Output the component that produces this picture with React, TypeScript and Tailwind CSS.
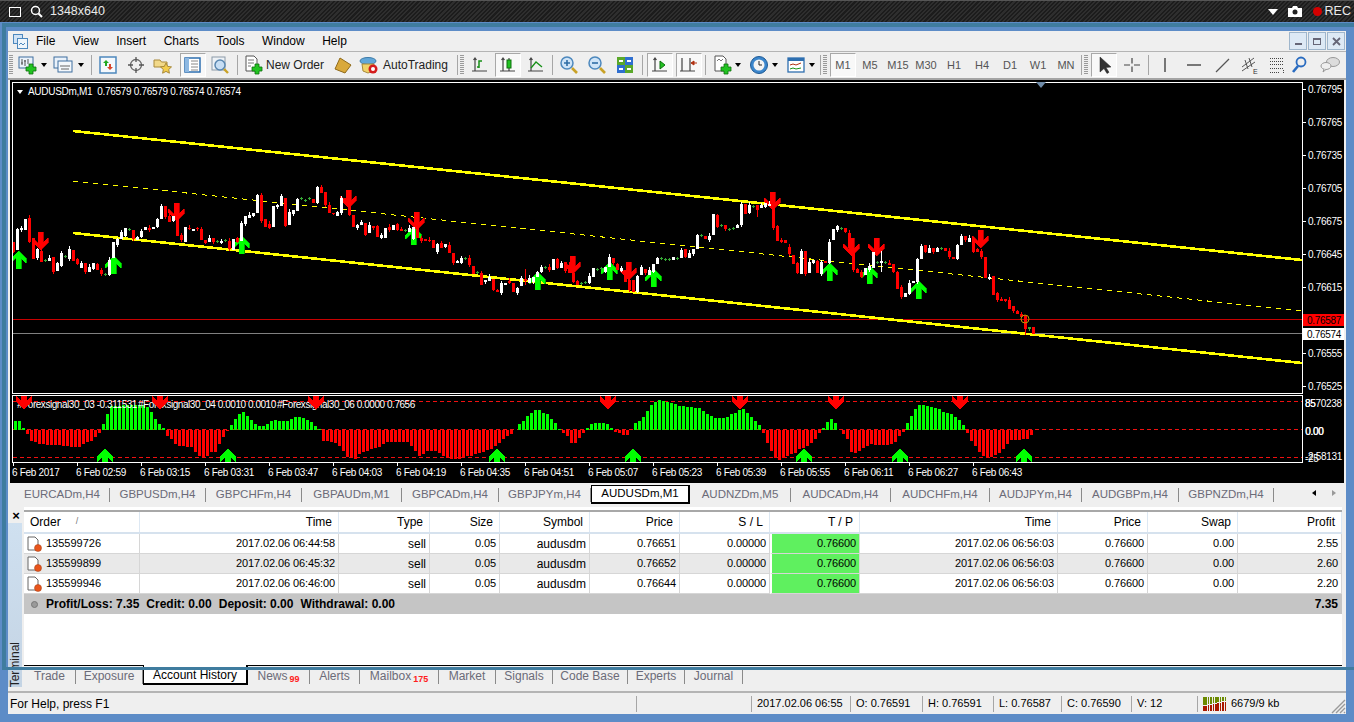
import React from "react";

const candleData =
  "r242-252 w229-250 w228-230 w219-230 r218-242 r238-259 w249-258 r251-262 g260 w258-261 r257-272 w263-271 w253-266 g256 w249-259 r250-261 r259-264 w263-268 r263-272 w267-272 w263-269 r264-270 r270-274 g274 w260-275 w242-258 w239-245 w232-239 w228-236 g229 r230-239 w237-240 w231-237 w227-230 r228-230 w227-229 w219-227 w206-219 r206-217 r216-222 w216-221 r210-236 r235-240 w227-242 r228-229 w229-231 r228-229 r229-240 r240-243 w238-242 r238-242 g241 w241-243 g240 r241-249 w239-250 r238-242 w223-241 w216-224 w215-218 w213-216 w195-213 r195-221 r219-227 r224-228 w206-227 w205-207 w196-206 r198-226 w212-225 w210-214 w199-211 g198 g200 g198 r199-203 w187-203 r187-193 r192-205 r205-213 r213-214 w212-216 w198-213 r198-203 r203-215 r215-227 w225-228 w222-225 r223-235 w225-233 r226-228 r226-237 w235-238 w228-238 r227-230 w225-230 r224-230 r229-231 g230 w228-232 w227-239 r220-238 r238-241 r239-241 r240-241 r240-248 w244-252 r243-248 w244-247 r245-253 r253-263 w261-263 w258-263 g258 r258-265 r266-274 g272 r273-285 w280-282 w277-281 r279-290 r290-292 w283-293 w283-285 r281-283 r283-292 w288-293 w278-286 r279-281/269-285 w278-283 w277-282 w272-277 w267-272 g267 r267-270 w259-270 r259-268 w263-268 r262-271 r265-273 r273-282 r281-285 g283 g282 w276-283 w268-277 g269 g268 w267-272 w257-267 r258-263 r264-270 w268-271 r270-282 r280-290 r280-292 w276-292 w267-275 r269-273 w270-275 w264-272 w258-264 g258 g259 g259 w257-260 g258 w250-258 r249-257 w253-258 w249-254 w235-249 g235 r236-239 w236-240 w214-235 r215-227 g225 r225-229 g229 g228 w225-228 w204-225 r204-214 w205-213 g206 r205-210/205-217 w205-208 w203-207 w204-206 r203-228 r226-241 r240-242 r240-243 r247-254 r255-264 r263-273 w251-274 r251-274 w262-273 w260-263 r261-273 w262-274 r261-263 w242-263 w229-240 w226-230 g228 r228-232 r233-248 r248-270 r269-273 r272-277 w268-275 w266-270 w252-268 g262 w261-263/251-272 g262 r263-265 r264-272 r272-289 r287-297 w293-297 w283-294 w281-283 w259-282 w246-259 r245-252 w248-253 r248-252 w248-252 g248 r248-251 r251-257 r257-259 w245-259 w236-245 r236-240 w238-242 r238-252 r249-252 r251-257 r257-278 w277-279 r276-295 r293-300 r299-301 r299-301 r300-309 r306-311 r311-314 r314-317 r315-329/315-335 g328 r327-334";

const histogram = [
  9, 9, 2, -4, -11, -12, -14, -14, -15, -15, -15, -15, -16, -16, -17, -17, -17, -14, -12, -11, -7, -3, 6, 16, 24, 24, 24, 25, 25, 25, 25, 25, 25, 23, 18, 11, 6, 2,
  -6, -9, -14, -16, -16, -17, -17, -22, -26, -27, -26, -22, -22, -14, -7, -1, 5, 11, 16, 18, 14, 10, 6, 4, 4, 6, 9, 10, 9, 9, 9, 11, 13, 13, 12, 10, 8, 4, 1,
  -11, -11, -12, -13, -16, -21, -27, -27, -29, -24, -22, -21, -19, -18, -17, -14, -12, -12, -12, -12, -12, -12, -16, -21, -26, -24, -21, -21, -21,
  -23, -26, -28, -29, -29, -29, -27, -26, -26, -24, -23, -22, -20, -19, -16, -13, -9, -6, -4, 0, 6, 9, 14, 17, 20, 20, 17, 16, 11, 7, 1,
  -3, -6, -13, -13, -8, -3, 2, 6, 7, 7, 7, 6, 2, -2, -3, -5, -5, 0, 7, 9, 13, 19, 25, 28, 30, 29, 28, 27, 26, 24, 24, 23, 23, 22, 22, 19, 16, 14, 12, 12, 12, 13, 16, 17, 20, 21, 17, 13, 9, 5,
  -3, -13, -21, -28, -30, -28, -26, -24, -23, -19, -18, -16, -13, -9, -3, 2, 8, 11, 7, 0, -4, -9, -22, -23, -21, -18, -16, -14, -15, -15, -15, -15, -14, -12, -6, -2,
  7, 14, 21, 25, 25, 24, 23, 22, 21, 18, 17, 16, 13, 10, 5, -3, -11, -16, -22, -26, -28, -27, -25, -23, -19, -14, -10, -10, -10, -9, -9, -5,
];

const bigUp: [number, number][] = [[18, 251], [113, 256], [241, 236], [413, 227], [537, 272], [609, 262], [653, 269], [829, 263], [869, 266], [918, 281]];
const bigDown: [number, number][] = [[40, 232], [176, 203], [348, 190], [416, 212], [572, 256], [628, 262], [772, 192], [851, 238], [876, 238], [980, 230]];
const smallDown = [24, 160, 316, 608, 740, 836, 960];
const smallUp = [105, 228, 497, 633, 804, 900, 1024];

const bigShape = [[0, 0], [8, 8], [8, 12], [2.5, 7], [2.5, 18], [-2.5, 18], [-2.5, 7], [-8, 12], [-8, 8]];
const smallShape = [[0, 0], [8, 7], [8, 13], [3, 9], [3, 13], [-3, 13], [-3, 9], [-8, 13], [-8, 7]];

function arrowPoints(shape: number[][], cx: number, top: number, down: boolean) {
  const h = shape[4][1];
  return shape.map(([x, y]) => `${cx + x},${down ? top + h - y : top + y}`).join(" ");
}

function Candles() {
  return (
    <>
      {candleData.split(" ").map((tok, i) => {
        const x = 13 + i * 4;
        const kind = tok[0];
        if (kind === "g") {
          const y = Number(tok.slice(1));
          return (
            <g key={i} fill="#35a835">
              <rect x={x - 1} y={y} width={3} height={1} />
              <rect x={x} y={y - 1} width={1} height={3} />
            </g>
          );
        }
        const [body, wick] = tok.slice(1).split("/");
        const [a, b] = body.split("-").map(Number);
        const hi = wick ? Number(wick.split("-")[0]) : a - [0, 1, 2, 0, 3][i % 5];
        const lo = wick ? Number(wick.split("-")[1]) : b + [1, 0, 2, 0][i % 4];
        const fill = kind === "w" ? "#ffffff" : "#ff0000";
        return (
          <g key={i} fill={fill}>
            <rect x={x} y={hi} width={1} height={lo - hi} />
            <rect x={x - 1} y={a} width={3} height={b - a} />
          </g>
        );
      })}
    </>
  );
}

function MainPlot() {
  return (
    <svg width="1289" height="310" viewBox="13 83 1289 310" shapeRendering="crispEdges" className="block">
      <line x1="13" y1="319" x2="1302" y2="319" stroke="#c80000" />
      <line x1="13" y1="333" x2="1302" y2="333" stroke="#808080" />
      <line x1="73" y1="131" x2="1302" y2="260" stroke="#ffff00" strokeWidth="2.6" />
      <line x1="73" y1="181" x2="1302" y2="311" stroke="#ffff00" strokeWidth="1" strokeDasharray="5 5" />
      <line x1="73" y1="233" x2="1302" y2="363" stroke="#ffff00" strokeWidth="2.6" />
      {bigUp.map(([x, y]) => (
        <g key={x}>
          <polygon points={arrowPoints(bigShape, x + 1, y, false)} fill="#00a800" />
          <polygon points={arrowPoints(bigShape, x, y, false)} fill="#00ff00" />
        </g>
      ))}
      {bigDown.map(([x, y]) => (
        <g key={x}>
          <polygon points={arrowPoints(bigShape, x + 1, y, true)} fill="#a80000" />
          <polygon points={arrowPoints(bigShape, x, y, true)} fill="#ff0000" />
        </g>
      ))}
      <Candles />
      <circle cx="1025" cy="319" r="4" fill="none" stroke="#b89a00" shapeRendering="auto" />
      <rect x="1028" y="327" width="3" height="1" fill="#35a835" />
      <rect x="1029" y="327" width="1" height="4" fill="#35a835" />
    </svg>
  );
}

function SubPlot() {
  return (
    <svg width="1289" height="66" viewBox="13 396 1289 66" shapeRendering="crispEdges" className="block">
      {[401, 429, 457].map((y) => (
        <line key={y} x1="13" y1={y} x2="1302" y2={y} stroke="#f01010" strokeDasharray="4 3" />
      ))}
      {histogram.map((v, i) => (
        <rect key={i} x={14 + i * 4} y={v > 0 ? 430 - v : 430} width={3} height={Math.abs(v)} fill={v > 0 ? "#00ff00" : "#ff0000"} />
      ))}
      <g fill="#ffffff" fontSize="10" letterSpacing="-0.45" shapeRendering="auto">
        <text x="17" y="408">#Forexsignal30_03 -0.311531</text>
        <text x="138" y="408">#Forexsignal30_04 0.0010 0.0010</text>
        <text x="277" y="408">#Forexsignal30_06 0.0000 0.7656</text>
      </g>
      {smallDown.map((x) => (
        <polygon key={x} points={arrowPoints(smallShape, x, 396, true)} fill="#ff0000" />
      ))}
      {smallUp.map((x) => (
        <polygon key={x} points={arrowPoints(smallShape, x, 449, false)} fill="#00ff00" />
      ))}
    </svg>
  );
}

const Icon = ({ children, size = 20 }: { children: React.ReactNode; size?: number }) => (
  <svg width={size} height={size} viewBox="0 0 20 20">
    {children}
  </svg>
);

const Plus = () => <path d="M11 9h4v3h3v4h-3v3h-4v-3H8v-4h3z" fill="#22c322" stroke="#0d6f0d" strokeWidth="0.8" />;

const Axes = () => <path d="M5 3v13M2 16h15M3.5 5L5 3l1.5 2" fill="none" stroke="#444" strokeWidth="1.2" />;

const icons: Record<string, React.ReactNode> = {
  newChart: (
    <>
      <rect x="1" y="2" width="14" height="11" fill="#eaf2fb" stroke="#3f6f9f" />
      <path d="M4 4v6M3 8h2M7 5v6M6 6h2M10 4v5" stroke="#555" fill="none" />
      <Plus />
    </>
  ),
  profiles: (
    <>
      <rect x="1" y="2" width="13" height="11" fill="#eaf2fb" stroke="#3f6f9f" />
      <rect x="5" y="6" width="14" height="11" fill="#f4f8fc" stroke="#3f6f9f" />
      <path d="M7 11h10M8 14h8" stroke="#666" />
    </>
  ),
  market: (
    <>
      <rect x="2" y="2" width="16" height="16" fill="#f4f8fc" stroke="#4d88bd" strokeWidth="1.5" />
      <path d="M8 5l3 3H9v3H7V8H5z" fill="#22a822" />
      <path d="M12 15l-3-3h2V9h2v3h2z" fill="#d8452a" />
    </>
  ),
  nav: (
    <>
      <circle cx="10" cy="10" r="5.5" fill="none" stroke="#666" strokeWidth="1.3" />
      <path d="M10 2v5M10 13v5M2 10h5M13 10h5" stroke="#555" strokeWidth="1.3" />
    </>
  ),
  favorites: (
    <>
      <path d="M1 5h6l1.5 2H14v5H1z" fill="#f2d98a" stroke="#a8893a" />
      <path d="M13 8l1.7 3.4 3.8.5-2.8 2.6.7 3.7-3.4-1.8-3.4 1.8.7-3.7-2.8-2.6 3.8-.5z" fill="#f3cd4d" stroke="#a8893a" />
    </>
  ),
  navigator: (
    <>
      <rect x="2" y="3" width="15" height="14" fill="#fff" stroke="#2e6fb0" strokeWidth="1.5" />
      <rect x="2" y="3" width="4" height="14" fill="#8db8e2" />
      <path d="M8 6h7M8 9h7M8 12h7M8 15h7" stroke="#888" />
    </>
  ),
  tester: (
    <>
      <rect x="2" y="2" width="13" height="13" fill="#eef2f6" stroke="#8b9aa8" />
      <circle cx="10" cy="10" r="5" fill="#c7def4" stroke="#5a87b0" strokeWidth="1.5" />
      <path d="M14 14l4 4" stroke="#c9a227" strokeWidth="2.4" />
    </>
  ),
  newOrder: (
    <>
      <path d="M2 1h8l3 3v12H2z" fill="#fff" stroke="#555" />
      <path d="M4 5h6M4 8h6M4 11h3" stroke="#777" />
      <Plus />
    </>
  ),
  wood: <path d="M7 3l11 7-6 8-10-4z" fill="#d9a93c" stroke="#8f6a1b" />,
  auto: (
    <>
      <ellipse cx="9" cy="6" rx="8" ry="3.5" fill="#62a7d8" stroke="#3c7aa8" />
      <path d="M3 9h12l-1 7-5 2-5-2z" fill="#f1d268" stroke="#a8893a" />
      <circle cx="14" cy="14" r="4.5" fill="#d41c1c" />
      <circle cx="14" cy="14" r="2" fill="#fff" />
    </>
  ),
  bar: (
    <>
      <Axes />
      <path d="M9 13V6h3M9 12h-2" fill="none" stroke="#179017" strokeWidth="1.5" />
    </>
  ),
  candle: (
    <>
      <Axes />
      <path d="M11 3v13" stroke="#222" />
      <rect x="9" y="5" width="4" height="8" fill="#22c322" stroke="#0d6f0d" />
    </>
  ),
  line: (
    <>
      <Axes />
      <path d="M5 13l5-6 6 5" fill="none" stroke="#179017" strokeWidth="1.3" />
    </>
  ),
  zoomIn: (
    <>
      <circle cx="8" cy="8" r="6" fill="#cfe4f7" stroke="#4d88bd" strokeWidth="1.5" />
      <path d="M5 8h6M8 5v6" stroke="#2f6da5" strokeWidth="1.6" />
      <path d="M13 13l5 5" stroke="#c9a227" strokeWidth="2.6" />
    </>
  ),
  zoomOut: (
    <>
      <circle cx="8" cy="8" r="6" fill="#cfe4f7" stroke="#4d88bd" strokeWidth="1.5" />
      <path d="M5 8h6" stroke="#2f6da5" strokeWidth="1.6" />
      <path d="M13 13l5 5" stroke="#c9a227" strokeWidth="2.6" />
    </>
  ),
  tile: (
    <>
      <rect x="2" y="2" width="8" height="8" fill="#5aa82a" />
      <rect x="10" y="2" width="8" height="8" fill="#2f6fd0" />
      <rect x="2" y="10" width="8" height="8" fill="#2f6fd0" />
      <rect x="10" y="10" width="8" height="8" fill="#5aa82a" />
      <path d="M4 6h4M12 6h4M4 14h4M12 14h4" stroke="#fff" strokeWidth="2" />
    </>
  ),
  scroll: (
    <>
      <Axes />
      <path d="M10 6l5 4-5 4z" fill="#22c322" stroke="#0d6f0d" />
    </>
  ),
  shift: (
    <>
      <path d="M3 3v13M1 16h15M11 3v13" fill="none" stroke="#444" strokeWidth="1.2" />
      <path d="M14 8h4M12 8l3-2v4z" fill="#b03010" stroke="#b03010" />
    </>
  ),
  indicators: (
    <>
      <path d="M2 1h8l3 3v12H2z" fill="#fff" stroke="#555" />
      <path d="M4 6l2-2 2 2 2-2" fill="none" stroke="#777" />
      <Plus />
    </>
  ),
  clock: (
    <>
      <circle cx="10" cy="10" r="8.5" fill="#3b86cc" stroke="#1f5a95" />
      <circle cx="10" cy="10" r="5.5" fill="#f4f4f4" />
      <path d="M10 6v4h3" fill="none" stroke="#222" />
    </>
  ),
  templates: (
    <>
      <rect x="2" y="3" width="16" height="14" fill="#fff" stroke="#2e6fb0" strokeWidth="1.3" />
      <rect x="2" y="3" width="16" height="3" fill="#2e6fb0" />
      <path d="M4 10l3-1 3 1 5-2" fill="none" stroke="#b03010" />
      <path d="M4 14l3-1 3 1 5-1" fill="none" stroke="#179017" />
    </>
  ),
  cursor: <path d="M6 2v15l4-3.5 3 5 2-1.2-3-4.8 5-.5z" fill="#333" stroke="#222" strokeWidth="0.5" />,
  cross: <path d="M10 3v5.5M10 11.500v5.500M2 10h6M12 10h6" stroke="#444" strokeWidth="1.2" />,
  vert: <path d="M10 3v14" stroke="#444" strokeWidth="1.4" />,
  horiz: <path d="M3 10h14" stroke="#444" strokeWidth="1.4" />,
  trend: <path d="M4 17L17 4" stroke="#555" strokeWidth="1.3" />,
  channel: (
    <>
      <path d="M2 12L14 3M2 16L15 7M5 5l3 9M9 3l3 9" stroke="#555" fill="none" />
      <text x="13" y="19" fontSize="7" fill="#333">E</text>
    </>
  ),
  fib: <path d="M3 3.500h13M3 6.500h13M3 9.500h13M3 13.500h13M3 17.500h10M16.500 15v3" stroke="#444" strokeDasharray="1 1" fill="none" />,
  magnifier: (
    <>
      <circle cx="12" cy="7" r="4.500" fill="none" stroke="#2a6cc0" strokeWidth="1.8" />
      <path d="M9 11l-5 6" stroke="#2a6cc0" strokeWidth="2.6" />
    </>
  ),
  chat: (
    <>
      <ellipse cx="13" cy="7" rx="6.500" ry="4.500" fill="#dcdcdc" stroke="#999" />
      <ellipse cx="6" cy="11" rx="5" ry="3.500" fill="#efefef" stroke="#999" />
      <path d="M4 14l-1 3 3-2.500" fill="#efefef" stroke="#999" />
    </>
  ),
};

const Caret = ({ className }: { className: string }) => (
  <div className={`${className} w-[7px] h-[24px] flex items-center justify-center`}>
    <div className="border-x-[3.500px] border-x-transparent border-t-[4px] border-t-black" />
  </div>
);
const Sep = ({ className }: { className: string }) => <div className={`${className} w-px h-[20px] bg-[#a6a6a6]`} />;
const Grip = ({ className }: { className: string }) => (
  <div className={`${className} w-[4px] h-[20px] bg-[repeating-linear-gradient(180deg,#9a9a9a_0,#9a9a9a_1px,transparent_1px,transparent_2px)]`} />
);
const Tool = ({ name, className }: { name: string; className: string }) => (
  <div className={`${className} w-[20px] h-[24px] flex items-center justify-center`}>
    <Icon>{icons[name]}</Icon>
  </div>
);
const Active = ({ children, className }: { children: React.ReactNode; className: string }) => (
  <div className={`${className} w-[26px] h-[24px] flex items-center justify-center border border-[#a8a8a8] border-r-white border-b-white bg-[#f8f8f8]`}>
    {children}
  </div>
);

const Toolbar = () => (
  <div className="h-[28px] flex items-center bg-[#efefef] border-b-2 border-[#a4a4a4] shrink-0">
    <Grip className="ml-[1px]" />
    <Tool name="newChart" className="ml-[5px]" />
    <Caret className="ml-[2px]" />
    <Tool name="profiles" className="ml-[6px]" />
    <Caret className="ml-[4px]" />
    <Sep className="ml-[7px]" />
    <Tool name="market" className="ml-[6px]" />
    <Tool name="nav" className="ml-[8px]" />
    <Tool name="favorites" className="ml-[7px]" />
    <Active className="ml-[7px]"><Icon>{icons.navigator}</Icon></Active>
    <Tool name="tester" className="ml-[4px]" />
    <Sep className="ml-[7px]" />
    <Tool name="newOrder" className="ml-[6px]" />
    <span className="ml-[2px] w-[57px] text-[12px] whitespace-nowrap text-[#222]">New Order</span>
    <Tool name="wood" className="ml-[10px]" />
    <Tool name="auto" className="ml-[6px]" />
    <span className="ml-[4px] w-[67px] text-[12px] whitespace-nowrap text-[#222]">AutoTrading</span>
    <Sep className="ml-[7px]" />
    <Grip className="ml-[2px]" />
    <Tool name="bar" className="ml-[6px]" />
    <Active className="ml-[5px]"><Icon>{icons.candle}</Icon></Active>
    <Tool name="line" className="ml-[5px]" />
    <Sep className="ml-[6px]" />
    <Tool name="zoomIn" className="ml-[6px]" />
    <Tool name="zoomOut" className="ml-[8px]" />
    <Tool name="tile" className="ml-[8px]" />
    <Sep className="ml-[7px]" />
    <Active className="ml-[4px]"><Icon>{icons.scroll}</Icon></Active>
    <Active className="ml-[3px]"><Icon>{icons.shift}</Icon></Active>
    <Sep className="ml-[3px]" />
    <Tool name="indicators" className="ml-[7px]" />
    <Caret className="ml-[1px]" />
    <Tool name="clock" className="ml-[8px]" />
    <Caret className="ml-[2px]" />
    <Tool name="templates" className="ml-[8px]" />
    <Caret className="ml-[2px]" />
    <Sep className="ml-[5px]" />
    <Grip className="ml-[2px]" />
    <Active className="ml-[3px] text-[11px] text-[#555]">M1</Active>
    {["M5", "M15", "M30", "H1", "H4", "D1", "W1", "MN"].map((t) => (
      <div key={t} className="w-[28px] text-center text-[11px] text-[#555]">{t}</div>
    ))}
    <Sep className="ml-[1px]" />
    <Grip className="ml-[2px]" />
    <Active className="ml-[3px]"><Icon>{icons.cursor}</Icon></Active>
    <Tool name="cross" className="ml-[5px]" />
    <Sep className="ml-[6px]" />
    <Tool name="vert" className="ml-[6px]" />
    <Tool name="horiz" className="ml-[9px]" />
    <Tool name="trend" className="ml-[8px]" />
    <Tool name="channel" className="ml-[8px]" />
    <Tool name="fib" className="ml-[7px]" />
    <Tool name="magnifier" className="ml-[2px]" />
    <Tool name="chat" className="ml-[11px]" />
  </div>
);

const prices = ["0.76795", "0.76765", "0.76735", "0.76705", "0.76675", "0.76645", "0.76615", "", "0.76555", "0.76525"];
const times = ["6 Feb 2017", "6 Feb 02:59", "6 Feb 03:15", "6 Feb 03:31", "6 Feb 03:47", "6 Feb 04:03", "6 Feb 04:19", "6 Feb 04:35", "6 Feb 04:51", "6 Feb 05:07", "6 Feb 05:23", "6 Feb 05:39", "6 Feb 05:55", "6 Feb 06:11", "6 Feb 06:27", "6 Feb 06:43"];

const ChartPanel = () => (
  <div className="ml-[2px] w-[1334px] h-[403px] bg-black pt-[2px] text-white text-[10px] tracking-[-0.3px] shrink-0">
    <div className="relative h-[312px] flex">
      <div className="ml-[2px] w-[1291px] h-[312px] border border-white">
        <MainPlot />
      </div>
      <div className="flex-1">
        {prices.map((p, i) => (
          <div key={i} className="h-[33.1px]">
            {p && (
              <div className="h-[14px] flex items-center gap-[2px]">
                <div className="w-[3px] h-px bg-white" />
                <span>{p}</span>
              </div>
            )}
          </div>
        ))}
      </div>
      <div className="absolute left-[7px] top-[2px] flex items-center gap-[5px] whitespace-nowrap">
        <div className="border-x-[3.500px] border-x-transparent border-t-[4px] border-t-white" />
        <span>AUDUSDm,M1&nbsp; 0.76579 0.76579 0.76574 0.76574</span>
      </div>
      <div className="absolute left-[1026px] top-0 border-x-[5px] border-x-transparent border-t-[6px] border-t-[#6f8ba8]" />
      <div className="absolute left-[1293px] top-[232px] w-[41px] h-[12px] bg-[#ff0000] text-black flex items-center pl-[4px]">0.76587</div>
      <div className="absolute left-[1293px] top-[246px] w-[41px] h-[12px] bg-white text-black flex items-center pl-[4px]">0.76574</div>
    </div>
    <div className="relative mt-px h-[68px] flex">
      <div className="ml-[2px] w-[1291px] h-[68px] border border-white">
        <SubPlot />
      </div>
      <div className="absolute left-[1295px] top-0 h-[68px] w-[39px]">
        <span className="absolute left-0 top-[1px]">85</span>
        <span className="absolute left-0 top-[1px]">8570238</span>
        <span className="absolute left-0 top-[29px]">0.00</span>
        <span className="absolute left-[0.5px] top-[29px]">0.00</span>
        <span className="absolute left-0 top-[56px]">-25</span>
        <span className="absolute left-0 top-[54px]">-2.58131</span>
      </div>
    </div>
    <div className="ml-[2px] flex">
      {times.map((t) => (
        <div key={t} className="w-[64px] whitespace-nowrap">
          <div className="ml-px w-px h-[3px] bg-white" />
          <div className="mt-[1px] leading-[12px]">{t}</div>
        </div>
      ))}
    </div>
  </div>
);

const docTabs: [string, string][] = [
  ["EURCADm,H4", "w-[95px]"],
  ["GBPUSDm,H4", "w-[96px]"],
  ["GBPCHFm,H4", "w-[96px]"],
  ["GBPAUDm,M1", "w-[100px]"],
  ["GBPCADm,H4", "w-[97px]"],
  ["GBPJPYm,H4", "w-[92px]"],
  ["AUDUSDm,M1", "w-[99px]"],
  ["AUDNZDm,M5", "w-[101px]"],
  ["AUDCADm,H4", "w-[100px]"],
  ["AUDCHFm,H4", "w-[99px]"],
  ["AUDJPYm,H4", "w-[92px]"],
  ["AUDGBPm,H4", "w-[97px]"],
  ["GBPNZDm,H4", "w-[95px]"],
];

const DocTabs = () => (
  <div className="h-[24px] bg-[#efefef] flex items-start pt-[2px] pl-[7px] text-[11.500px] shrink-0">
    {docTabs.map(([t, w]) =>
      t === "AUDUSDm,M1" ? (
        <div key={t} className={`${w} h-[19px] bg-white border border-black border-r-2 border-b-2 flex items-center justify-center text-black`}>{t}</div>
      ) : (
        <div key={t} className={`${w} h-[14px] mt-[3px] border-r border-[#8a8a8a] flex items-center justify-center text-[#6b6b78]`}>{t}</div>
      )
    )}
    <div className="ml-[38px] mt-[5px] flex items-center gap-[16px]">
      <div className="border-y-[3px] border-y-transparent border-r-[4px] border-r-black" />
      <div className="border-y-[3px] border-y-transparent border-l-[4px] border-l-[#999]" />
    </div>
  </div>
);

const cols = "grid grid-cols-[116px_199px_91px_70px_90px_90px_90px_90px_198px_90px_90px_104px]";
const headers = ["Time", "Type", "Size", "Symbol", "Price", "S / L", "T / P", "Time", "Price", "Swap", "Profit"];
const rows = [
  { id: "135599726", time: "2017.02.06 06:44:58", price: "0.76651", profit: "2.55" },
  { id: "135599899", time: "2017.02.06 06:45:32", price: "0.76652", profit: "2.60" },
  { id: "135599946", time: "2017.02.06 06:46:00", price: "0.76644", profit: "2.20" },
];

const OrderIcon = () => (
  <svg width="15" height="16" viewBox="0 0 15 16">
    <path d="M1 1h7l3 3v10H1z" fill="#fff" stroke="#666" />
    <circle cx="11" cy="12" r="3.500" fill="#e8551c" stroke="#a33a10" strokeWidth="0.5" />
  </svg>
);

const Cell = ({ children, wide }: { children: React.ReactNode; wide?: boolean }) => (
  <div className={`h-[20px] flex items-center justify-end pr-[3px] border-r border-b border-[#d6d6d6] ${wide ? "text-[12px]" : "text-[11px] tracking-[-0.1px]"}`}>{children}</div>
);

const Table = () => (
  <div className="flex-1 bg-white overflow-hidden">
    <div className={`${cols} h-[24px] border-t-2 border-b-2 border-t-[#a8a8a8] border-b-[#d6e2ee] text-[12px] mt-[3px]`}>
      <div className="flex items-center pl-[6px] border-r border-[#dde8f3]">
        Order<span className="ml-[15px] text-[9px] text-[#777]">/</span>
      </div>
      {headers.map((h, i) => (
        <div key={i} className="flex items-center justify-end pr-[6px] border-r border-[#dde8f3]">{h}</div>
      ))}
    </div>
    {rows.map((r, i) => (
      <div key={r.id} className={`${cols} ${i === 1 ? "bg-[#e9e9e9]" : "bg-white"}`}>
        <div className="h-[20px] flex items-center pl-[3px] gap-[4px] border-r border-b border-[#d6d6d6] text-[11px]">
          <OrderIcon />
          {r.id}
        </div>
        <Cell>{r.time}</Cell>
        <Cell wide>sell</Cell>
        <Cell>0.05</Cell>
        <Cell wide>audusdm</Cell>
        <Cell>{r.price}</Cell>
        <Cell>0.00000</Cell>
        <div className="h-[20px] flex items-center justify-end pr-[3px] border-r border-b border-l-2 border-[#d6d6d6] border-l-white text-[11px] tracking-[-0.1px] bg-[#5ff05f]">0.76600</div>
        <Cell>2017.02.06 06:56:03</Cell>
        <Cell>0.76600</Cell>
        <Cell>0.00</Cell>
        <Cell>{r.profit}</Cell>
      </div>
    ))}
    <div className="h-[20px] bg-[#c5c5c5] flex items-center font-bold text-[12px] pr-[4px]">
      <div className="ml-[7px] w-[7px] h-[7px] rounded-full bg-[#9a9a9a] border border-[#777]" />
      <span className="ml-[8px]">Profit/Loss: 7.35</span>
      <span className="ml-[7px]">Credit: 0.00</span>
      <span className="ml-[7px]">Deposit: 0.00</span>
      <span className="ml-[7px]">Withdrawal: 0.00</span>
      <span className="ml-auto">7.35</span>
    </div>
  </div>
);

const termTabs: { t: string; w: string; badge?: string }[] = [
  { t: "Trade", w: "w-[52px]" },
  { t: "Exposure", w: "w-[67px]" },
  { t: "Account History", w: "w-[105px]" },
  { t: "News", w: "w-[62px]", badge: "99" },
  { t: "Alerts", w: "w-[50px]" },
  { t: "Mailbox", w: "w-[79px]", badge: "175" },
  { t: "Market", w: "w-[57px]" },
  { t: "Signals", w: "w-[57px]" },
  { t: "Code Base", w: "w-[75px]" },
  { t: "Experts", w: "w-[57px]" },
  { t: "Journal", w: "w-[58px]" },
];

const TermTabs = () => (
  <div className="h-[22px] bg-[#efefef] border-t border-black flex items-start text-[12px] shrink-0">
    {termTabs.map(({ t, w, badge }) =>
      t === "Account History" ? (
        <div key={t} className={`${w} h-[20px] -mt-px bg-white border-x border-black border-r-2 border-b-2 flex items-center justify-center pt-[2px] text-black`}>{t}</div>
      ) : (
        <div key={t} className={`${w} h-[14px] mt-[4px] pb-[3px] border-r border-[#8a8a8a] flex items-center justify-center text-[#6b6b78]`}>
          {t}
          {badge && <span className="ml-[2px] mt-[8px] text-[9px] leading-[9px] font-bold text-[#ff2020]">{badge}</span>}
        </div>
      )
    )}
  </div>
);

const Terminal = () => (
  <div className="h-[180px] flex bg-[#efefef] shrink-0">
    <div className="w-[16px] flex flex-col shrink-0">
      <div className="h-[16px] flex items-center justify-center text-[13px] font-bold leading-none text-black">×</div>
      <div className="w-[14px] flex-1 bg-[linear-gradient(180deg,#cfe0f0,#c4d4e4)] flex items-end justify-center">
        <span className="[writing-mode:vertical-rl] rotate-180 text-[12px] leading-none text-[#222]">Terminal</span>
      </div>
    </div>
    <div className="flex-1 flex flex-col pr-[4px]">
      <div className="h-[158px] flex flex-col bg-[#efefef] overflow-hidden">
        <Table />
      </div>
      <TermTabs />
    </div>
  </div>
);

const StatusIcon = () => (
  <svg width="24" height="14" viewBox="0 0 24 14" shapeRendering="crispEdges">
    {[0, 1, 2, 3, 4, 5, 6, 7, 8, 9].map((i) => (
      <g key={i}>
        <rect x={i * 2.4} y={0} width={1.5} height={8 - i * 0.5} fill="#6b8a00" />
        <rect x={i * 2.4} y={9 - i * 0.5} width={1.5} height={5 + i * 0.5} fill="#a81800" />
      </g>
    ))}
  </svg>
);

const statusCells: [string, string][] = [
  ["w-[115px]", ""],
  ["w-[99px]", "2017.02.06 06:55"],
  ["w-[72px]", "O: 0.76591"],
  ["w-[71px]", "H: 0.76591"],
  ["w-[68px]", "L: 0.76587"],
  ["w-[70px]", "C: 0.76590"],
  ["w-[66px]", "V: 12"],
];

const StatusBar = () => (
  <div className="relative h-[23px] border-t-2 border-[#b4b4b4] bg-[#efefef] flex items-center shrink-0 text-[11px]">
    <div className="w-[628px] pl-[2px] text-[12px]">For Help, press F1</div>
    {statusCells.map(([w, t]) => (
      <div key={w + t} className={`${w} h-[16px] border-l border-[#a6a6a6] flex items-center pl-[5px]`}>{t}</div>
    ))}
    <div className="h-[16px] border-l border-[#a6a6a6] flex items-center pl-[5px] gap-[4px]">
      <StatusIcon />
      <span>6679/9 kb</span>
    </div>
    <svg className="absolute right-0 bottom-0" width="15" height="15" viewBox="0 0 15 15">
      <path d="M14 1L1 14M14 5L5 14M14 9L9 14M14 13L13 14" stroke="#9a9a9a" strokeWidth="1.4" />
    </svg>
  </div>
);

const menus = ["File", "View", "Insert", "Charts", "Tools", "Window", "Help"];

const WinBtn = ({ children }: { children: React.ReactNode }) => (
  <div className="w-[18px] h-[18px] bg-[#dde9f5] border border-[#9fb6cc] flex items-center justify-center">{children}</div>
);

export default function App() {
  return (
    <div className="relative w-[1354px] h-[722px] overflow-hidden bg-[#5d8cc7] flex flex-col font-['Liberation_Sans',sans-serif] text-black">
      <div className="h-[22px] bg-[repeating-linear-gradient(135deg,#2e2e2e_0,#2e2e2e_1.5px,#1c1c1c_1.5px,#1c1c1c_3px)] border-t border-[#555] flex items-center text-[#eaeaea] text-[12.500px] shrink-0">
        <div className="ml-[9px] w-[12px] h-[10px] border-[1.500px] border-white" />
        <svg className="ml-[9px]" width="13" height="13" viewBox="0 0 13 13">
          <circle cx="5.500" cy="5.500" r="4" fill="none" stroke="#fff" strokeWidth="1.500" />
          <path d="M8.500 8.500L12 12" stroke="#fff" strokeWidth="2" />
        </svg>
        <span className="ml-[7px]">1348x640</span>
        <div className="ml-auto border-x-[5px] border-x-transparent border-t-[6px] border-t-white" />
        <svg className="ml-[10px]" width="14" height="11" viewBox="0 0 14 11">
          <path d="M0 2h4l1-2h4l1 2h4v9H0z" fill="#fff" />
          <circle cx="7" cy="6" r="2.500" fill="#222" />
        </svg>
        <div className="ml-[11px] w-[9px] h-[9px] rounded-full bg-[#d40000]" />
        <span className="ml-[3px] mr-[3px]">REC</span>
      </div>
      <div className="h-[9px] shrink-0" />
      <div className="ml-[8px] w-[1338px] flex flex-col shrink-0 bg-[#efefef]">
        <div className="h-[21px] flex items-center border-b border-[#b4b4b4] text-[12px] shrink-0">
          <svg className="ml-[5px]" width="15" height="15" viewBox="0 0 15 15">
            <rect x="0.500" y="0.500" width="9" height="9" fill="#cfe2f5" stroke="#4d88bd" />
            <rect x="4.500" y="4.500" width="10" height="10" fill="#eef5fb" stroke="#4d88bd" />
            <path d="M6 11l2-2 2 2 2-2" fill="none" stroke="#4d88bd" />
          </svg>
          <div className="ml-[8px] flex gap-[17.500px]">
            {menus.map((m) => (
              <span key={m}>{m}</span>
            ))}
          </div>
          <div className="ml-auto mr-px flex gap-px">
            <WinBtn><div className="w-[7px] h-[2px] mt-[5px] bg-[#667]" /></WinBtn>
            <WinBtn><div className="w-[8px] h-[7px] border border-[#667] border-t-2" /></WinBtn>
            <WinBtn>
              <svg width="9" height="9" viewBox="0 0 9 9"><path d="M1 1l7 7M8 1L1 8" stroke="#667" strokeWidth="1.800" /></svg>
            </WinBtn>
          </div>
        </div>
        <Toolbar />
        <ChartPanel />
        <DocTabs />
        <Terminal />
        <div className="h-[4px] shrink-0" />
        <StatusBar />
      </div>
      <div className="pointer-events-none absolute left-[2px] top-[23px] w-[1360px] h-[647px] border-4 border-b-[3px] border-[#3f7c9f]" />
    </div>
  );
}
